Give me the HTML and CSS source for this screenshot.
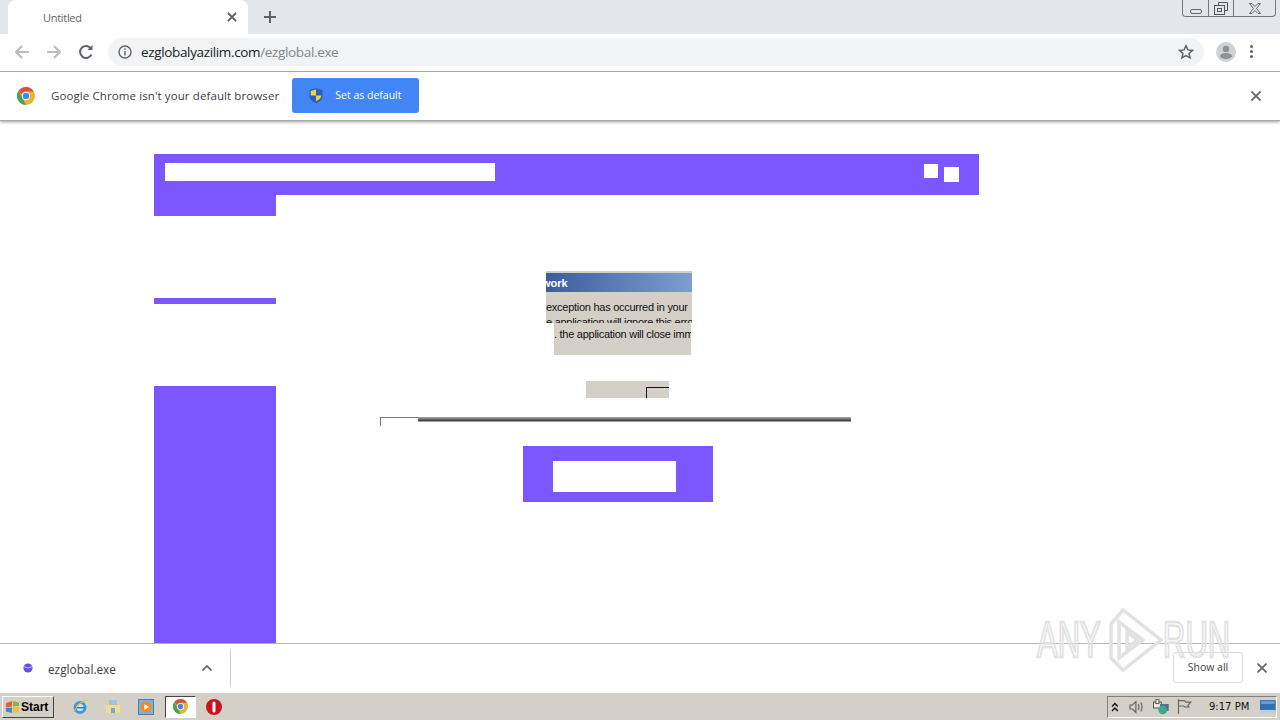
FILE: index.html
```html
<!DOCTYPE html>
<html lang="en">
<head>
    <meta charset="UTF-8">
    <title>Untitled</title>
    <link rel="stylesheet" href="styles.css">
</head>
<body>
    <div class="tabstrip">
        <div class="tab">
            <span class="tab-title">Untitled</span>
            <svg class="tab-close" width="10" height="10" viewBox="0 0 10 10"><path d="M1 1l8 8M9 1l-8 8" stroke="#5f6368" stroke-width="1.8"/></svg>
        </div>
        <svg class="new-tab" width="12" height="12" viewBox="0 0 12 12"><path d="M6 0v12M0 6h12" stroke="#5f6368" stroke-width="2"/></svg>
        <div class="win-controls">
            <div class="win-btn"><span class="win-min"></span></div>
            <div class="win-btn">
                <svg width="14" height="13" viewBox="0 0 14 13" fill="none" stroke="#555"><path d="M4.500 3V.5h9v8H11"/><rect x=".5" y="3.500" width="10" height="9"/><rect x="3.500" y="6.500" width="4" height="3"/></svg>
            </div>
            <div class="win-btn win-btn-close">
                <svg width="14" height="11" viewBox="0 0 14 11" fill="none" stroke="#666"><path d="M1.500.5h2.500l3 3 3-3h2.500l-4 5 4 5h-2.500l-3-3-3 3H1.500l4-5z"/></svg>
            </div>
        </div>
    </div>

    <div class="toolbar">
        <svg class="nav-icon" width="16" height="16" viewBox="0 0 16 16" fill="none" stroke="#b9bcc1" stroke-width="2"><path d="M15 8H2M8 2L2 8l6 6"/></svg>
        <svg class="nav-icon" width="16" height="16" viewBox="0 0 16 16" fill="none" stroke="#b9bcc1" stroke-width="2"><path d="M1 8h13M8 2l6 6-6 6"/></svg>
        <svg class="nav-icon" width="16" height="16" viewBox="0 0 16 16" fill="none" stroke="#5f6368" stroke-width="2"><path d="M13.500 10.500A6 6 0 1 1 13 4.500"/><path d="M14.500 1v5h-5" fill="#5f6368" stroke="none"/></svg>
        <div class="omnibox">
            <svg width="14" height="14" viewBox="0 0 14 14" fill="none" stroke="#5f6368" stroke-width="1.400"><circle cx="7" cy="7" r="6"/><path d="M7 6v4.500M7 3.300v1.500"/></svg>
            <span class="url">ezglobalyazilim.com<span class="url-path">/ezglobal.exe</span></span>
            <svg class="star" width="16" height="16" viewBox="0 0 16 16" fill="none" stroke="#5f6368" stroke-width="1.500"><path d="M8 1.800l1.900 4.100 4.500.5-3.300 3 .9 4.500L8 11.600l-4 2.300.9-4.500-3.300-3 4.500-.5z"/></svg>
        </div>
        <div class="avatar">
            <svg width="20" height="20" viewBox="0 0 20 20"><circle cx="10" cy="10" r="10" fill="#d0d1d3"/><circle cx="10" cy="7" r="3.200" fill="#8f9194"/><ellipse cx="10" cy="14" rx="6" ry="3" fill="#8f9194"/></svg>
        </div>
        <div class="dots"><i></i><i></i><i></i></div>
    </div>

    <div class="infobar">
        <svg class="chrome-logo" width="18" height="18" viewBox="0 0 18 18"><circle cx="9" cy="9" r="9" fill="#e5b52c"/><path d="M9 0a9 9 0 0 1 7.800 4.500H9a4.500 4.500 0 0 0-4.200 3L1.700 3.700A9 9 0 0 1 9 0z" fill="#d8503f"/><path d="M1.700 3.700l3.900 7.500 3.400 6.800A9 9 0 0 1 1.700 3.700z" fill="#4ba35a"/><circle cx="9" cy="9" r="4.200" fill="#fff"/><circle cx="9" cy="9" r="3.200" fill="#4a86e8"/></svg>
        <span class="info-text">Google Chrome isn't your default browser</span>
        <button class="default-btn">
            <svg width="14" height="15" viewBox="0 0 14 15"><path d="M7 0l6.500 2v6c0 3.500-3 5.800-6.500 7C3.500 13.800.5 11.500.5 8V2z" fill="#2f5fb8"/><path d="M7 1.500V7.500H1.800V3z" fill="#f0d24a"/><path d="M7 7.500h5.200c0 2.800-2.400 4.500-5.200 5.600z" fill="#f0d24a"/></svg>
            Set as default
        </button>
        <svg class="info-close" width="10" height="10" viewBox="0 0 10 10"><path d="M.5.500l9 9M9.500.500l-9 9" stroke="#5f6368" stroke-width="1.800"/></svg>
    </div>

    <div class="page">
        <div class="frag bar-head">
            <div class="frag head-field"></div>
            <div class="frag head-sq-a"></div>
            <div class="frag head-sq-b"></div>
        </div>
        <div class="frag side-a"></div>
        <div class="frag side-b"></div>
        <div class="frag side-c"></div>

        <div class="frag dlg-edge"></div>
        <div class="frag dlg-title"><span>work</span></div>
        <div class="frag dlg-body">
            <p class="dlg-line">exception has occurred in your</p>
            <p class="dlg-line">e application will ignore this error</p>
        </div>
        <div class="frag dlg-lower"><p class="dlg-line">. the application will close imm</p></div>
        <div class="frag dlg-btns"><div class="frag dlg-btn-edge"></div></div>
        <div class="frag rule-thin"></div>
        <div class="frag rule-thick"></div>

        <div class="frag cta"><div class="cta-inner"></div></div>
    </div>

    <div class="shelf">
        <div class="shelf-item">
            <svg width="10" height="10" viewBox="0 0 12 12"><circle cx="6" cy="6" r="5.500" fill="#6a4de0"/><path d="M1 4.500Q6 7.500 11 4.500" stroke="#d9d4f7" fill="none"/></svg>
            <span class="shelf-name">ezglobal.exe</span>
            <svg class="shelf-caret" width="10" height="6" viewBox="0 0 10 6" fill="none" stroke="#5f6368" stroke-width="1.600"><path d="M.5 5.500L5 1l4.500 4.500"/></svg>
        </div>
        <div class="shelf-sep"></div>
        <button class="show-all">Show all</button>
        <svg class="shelf-close" width="10" height="10" viewBox="0 0 10 10"><path d="M.5.500l9 9M9.500.500l-9 9" stroke="#5f6368" stroke-width="1.600"/></svg>
    </div>

    <div class="taskbar">
        <button class="start">
            <svg width="15" height="14" viewBox="0 0 15 14"><path d="M1 3l6-2v5.500l-6 1z" fill="#e8612c"/><path d="M8 1l6 1.500V6L8 6.500z" fill="#7dba3c"/><path d="M1 8l6-.5V13l-6-1.500z" fill="#3f86d8"/><path d="M8 7.500l6-.5v5l-6 1z" fill="#f2bf2f"/></svg>
            Start
        </button>
        <div class="quick">
            <svg width="16" height="16" viewBox="0 0 16 16"><circle cx="8" cy="8.500" r="6.500" fill="#3f9be0"/><circle cx="8" cy="8.500" r="3.500" fill="#cfeaf9"/><path d="M3 8h10v1.500H3z" fill="#2f7fc4"/><path d="M2 13Q6 3 15 1" stroke="#e9b93c" fill="none" stroke-width="1.200"/></svg>
            <svg width="16" height="15" viewBox="0 0 16 15"><path d="M1 3h6l1 2h7v9H1z" fill="#eccf78"/><rect x="4" y="1" width="8" height="6" fill="#9fc6e0"/><path d="M1 6h14v8H1z" fill="#f3dc95"/><rect x="6" y="9" width="4" height="5" fill="#7aa9c9"/></svg>
            <svg width="16" height="16" viewBox="0 0 16 16"><rect x=".5" y=".5" width="15" height="15" fill="#7fb0d9" stroke="#4d7ea8"/><circle cx="8" cy="8" r="5.500" fill="#ef8a1f"/><path d="M6.300 5v6L11 8z" fill="#fff"/></svg>
            <div class="task-active">
                <svg width="15" height="15" viewBox="0 0 18 18"><circle cx="9" cy="9" r="9" fill="#e5b52c"/><path d="M9 0a9 9 0 0 1 7.800 4.500H9a4.500 4.500 0 0 0-4.200 3L1.700 3.700A9 9 0 0 1 9 0z" fill="#d8503f"/><path d="M1.700 3.700l3.900 7.500 3.400 6.800A9 9 0 0 1 1.700 3.700z" fill="#4ba35a"/><circle cx="9" cy="9" r="4.200" fill="#fff"/><circle cx="9" cy="9" r="3.200" fill="#4a86e8"/></svg>
            </div>
            <svg width="16" height="16" viewBox="0 0 16 16"><circle cx="8" cy="8" r="8" fill="#c8141c"/><rect x="6.500" y="2.500" width="3" height="11" rx="1.500" fill="#fff"/></svg>
        </div>
        <div class="tray">
            <svg width="8" height="10" viewBox="0 0 8 10" fill="none" stroke="#111" stroke-width="1.500"><path d="M1 4.500L4 1.500l3 3M1 9l3-3 3 3"/></svg>
            <svg class="tray-speaker" width="16" height="14" viewBox="0 0 16 14" fill="none" stroke="#666" stroke-width="1.200"><path d="M1 5h2.500L7 1.500v11L3.500 9H1zM9.500 4q1.500 3 0 6M12 2.500q2.500 4.500 0 9"/></svg>
            <svg width="17" height="16" viewBox="0 0 17 16"><rect x=".5" y="3" width="8" height="6" fill="#eee" stroke="#555"/><rect x="3" y=".5" width="3" height="4" fill="#fff" stroke="#555"/><rect x="7" y="5" width="9" height="7" fill="#4f6f86"/><circle cx="10" cy="11" r="4.500" fill="#3fa78f"/></svg>
            <svg width="15" height="15" viewBox="0 0 15 15" fill="none" stroke="#666" stroke-width="1.200"><path d="M1.500 0v15M1.500 1.500h6l1.500 1.500h5l-3 3.500 1 1.500H8L6.500 7h-5"/></svg>
            <span class="clock">9:17 PM</span>
            <svg class="show-desk" width="16" height="13" viewBox="0 0 16 13"><rect width="16" height="11" fill="#2f6fb0"/><rect y="10" width="16" height="3" fill="#b8cfe0"/><rect x="1" y="1" width="14" height="3" fill="#5f9fd4"/></svg>
        </div>
    </div>

    <div class="watermark" aria-label="ANY RUN">
        <span class="wm-text">ANY</span>
        <svg width="58" height="64" viewBox="0 0 58 64" fill="none" stroke="#e2e2e2" stroke-width="3.500"><path d="M6 16L18 2l38 30-38 30L6 50zM14 14v36l24-18zM22 24v16l10-8z"/></svg>
        <span class="wm-text">RUN</span>
    </div>
</body>
</html>
```

FILE: styles.css
```css
* { box-sizing: border-box; }
html, body { height: 100%; }
body {
    margin: 0;
    width: 1280px;
    height: 720px;
    overflow: hidden;
    position: relative;
    display: flex;
    flex-direction: column;
    background: #fff;
    font-family: "Liberation Sans", Arial, sans-serif;
    color: #3c4043;
}
p { margin: 0; }
button { font-family: inherit; }

/* browser chrome */
.tabstrip {
    height: 34px;
    background: #e3e6ea;
    display: flex;
    align-items: center;
    padding-left: 8px;
    flex-shrink: 0;
}
.tab {
    width: 240px;
    height: 34px;
    background: #fff;
    border-radius: 8px 8px 0 0;
    display: flex;
    align-items: center;
    justify-content: space-between;
    padding: 0 11px 0 35px;
    font-family: "Open Sans", sans-serif;
    font-size: 11px;
    letter-spacing: -.3px;
    color: #5f6368;
}
.new-tab { margin-left: 16px; }
.win-controls {
    margin-left: auto;
    margin-right: 4px;
    margin-bottom: 17px;
    height: 17px;
    display: flex;
    border: 1px solid #777;
    border-top: none;
    border-radius: 0 0 4px 4px;
}
.win-btn {
    width: 25px;
    display: flex;
    align-items: center;
    justify-content: center;
    border-left: 1px solid #777;
}
.win-btn:first-child { border-left: none; }
.win-btn-close { width: 42px; }
.win-min {
    width: 12px;
    height: 5px;
    margin-top: 7px;
    border: 1px solid #666;
    border-radius: 2px;
}

.toolbar {
    height: 38px;
    background: #fff;
    border-bottom: 1px solid #b5b5b5;
    display: flex;
    align-items: center;
    padding: 0 0 2px 14px;
    flex-shrink: 0;
}
.nav-icon { margin-right: 16px; }
.omnibox {
    width: 1096px;
    height: 28px;
    margin-left: -2px;
    background: #f1f3f4;
    border-radius: 14px;
    display: flex;
    align-items: center;
    padding: 0 10px;
}
.url {
    margin-left: 9px;
    font-family: "Open Sans", sans-serif;
    font-size: 13.500px;
    letter-spacing: -.35px;
    color: #202124;
}
.url-path { color: #80868b; }
.star { margin-left: auto; }
.avatar { margin-left: 12px; display: flex; }
.dots {
    margin-left: 14px;
    display: flex;
    flex-direction: column;
    gap: 2px;
}
.dots i {
    width: 3px;
    height: 3px;
    border-radius: 50%;
    background: #5f6368;
}

.infobar {
    height: 49px;
    background: #fff;
    border-bottom: 1px solid #a9a9a9;
    box-shadow: 0 1px 3px rgba(0, 0, 0, .4);
    display: flex;
    align-items: center;
    padding: 0 15px 2px 17px;
    position: relative;
    z-index: 1;
    flex-shrink: 0;
}
.chrome-logo { margin-top: 2px; }
.info-text {
    margin-left: 16px;
    font-family: "Open Sans", sans-serif;
    font-size: 11.500px;
    letter-spacing: .1px;
    color: #3c4043;
}
.default-btn {
    margin-left: 13px;
    width: 127px;
    height: 35px;
    border: none;
    border-radius: 3px;
    background: #4285f4;
    color: #fff;
    font-family: "Open Sans", sans-serif;
    font-size: 10.500px;
    display: flex;
    align-items: center;
    gap: 12px;
    padding: 0 0 0 17px;
}
.info-close { margin: 2px 4px 0 auto; }

/* the broken page: loose fragments on a free canvas */
.page {
    flex: 1;
    position: relative;
    background: #fff;
}
.frag { position: absolute; }
.bar-head { left: 154px; top: 33px; width: 825px; height: 41px; background: #7c57ff; }
.head-field { left: 11px; top: 9px; width: 330px; height: 18px; background: #fff; }
.head-sq-a { left: 770px; top: 10px; width: 14px; height: 14px; background: #fff; }
.head-sq-b { left: 790px; top: 13px; width: 15px; height: 15px; background: #fff; }
.side-a { left: 154px; top: 74px; width: 122px; height: 21px; background: #7c57ff; }
.side-b { left: 154px; top: 177px; width: 122px; height: 6px; background: #7c57ff; }
.side-c { left: 154px; top: 265px; width: 122px; height: 257px; background: #7c57ff; }

.dlg-edge { left: 546px; top: 150px; width: 146px; height: 2px; background: #d4d0c8; }
.dlg-title {
    left: 546px;
    top: 152px;
    width: 146px;
    height: 19px;
    background: linear-gradient(90deg, #3d5c9e, #7d9fcf);
    overflow: hidden;
    color: #fff;
    font-size: 11px;
    font-weight: bold;
    line-height: 21px;
}
.dlg-title span { margin-left: -4px; }
.dlg-body {
    left: 546px;
    top: 171px;
    width: 146px;
    height: 31px;
    background: #d4d0c8;
    overflow: hidden;
    padding-top: 8px;
}
.dlg-body .dlg-line { line-height: 15px; }
.dlg-lower {
    left: 554px;
    top: 202px;
    width: 137px;
    height: 32px;
    background: #d4d0c8;
    overflow: hidden;
    padding-top: 4px;
}
.dlg-line {
    font-size: 11px;
    line-height: 14px;
    letter-spacing: -.27px;
    color: #111;
    white-space: nowrap;
}
.dlg-btns { left: 586px; top: 260px; width: 83px; height: 17px; background: #d4d0c8; overflow: hidden; }
.dlg-btn-edge { left: 60px; top: 6px; width: 30px; height: 20px; border: 1px solid #111; }
.rule-thin { left: 380px; top: 296px; width: 40px; height: 9px; border-left: 1px solid #777; border-top: 1px solid #777; }
.rule-thick { left: 418px; top: 296px; width: 433px; height: 5px; background: linear-gradient(#aaa 0, #777 40%, #444 70%, #ccc 100%); }

.cta {
    left: 523px;
    top: 325px;
    width: 190px;
    height: 56px;
    background: #7c57ff;
    padding: 15px 0 0 30px;
}
.cta-inner { width: 123px; height: 31px; background: #fff; }

/* downloads shelf */
.shelf {
    height: 49px;
    background: #fff;
    border-top: 1px solid #b5b5b5;
    display: flex;
    align-items: center;
    flex-shrink: 0;
    padding-right: 13px;
}
.shelf-item {
    width: 230px;
    display: flex;
    align-items: center;
    padding-left: 23px;
}
.shelf-name {
    margin: 2px 0 0 15px;
    font-family: "Open Sans", sans-serif;
    font-size: 11.800px;
    color: #3c4043;
}
.shelf-caret { margin-left: auto; margin-right: 18px; }
.shelf-sep { width: 1px; height: 38px; background: #d0d0d0; }
.show-all {
    margin-left: auto;
    margin-bottom: 2px;
    width: 70px;
    height: 31px;
    background: #fff;
    border: 1px solid #dadce0;
    border-radius: 3px;
    padding: 0 0 1px;
    font-family: "Open Sans", sans-serif;
    font-size: 10.500px;
    color: #3c4043;
}
.shelf-close { margin-left: 14px; }

/* windows taskbar */
.taskbar {
    height: 28px;
    background: #d4d0c8;
    border-top: 1px solid #fff;
    display: flex;
    align-items: center;
    flex-shrink: 0;
    padding: 0 3px 0 2px;
}
.start {
    width: 52px;
    height: 22px;
    padding: 0 0 0 2px;
    background: #d4d0c8;
    border: 1px solid;
    border-color: #fff #444 #444 #fff;
    display: flex;
    align-items: center;
    gap: 1px;
    font-size: 12px;
    font-weight: bold;
    color: #000;
}
.quick {
    margin-left: 18px;
    display: flex;
    align-items: center;
    gap: 17px;
}
.task-active {
    width: 31px;
    height: 22px;
    margin: 0 -7px 0 -6px;
    background: #fff;
    border: 1px solid;
    border-color: #444 #fff #fff #444;
    display: flex;
    align-items: center;
    justify-content: center;
}
.tray {
    margin-left: auto;
    width: 170px;
    height: 22px;
    border: 1px solid;
    border-color: #808080 #fff #fff #808080;
    display: flex;
    align-items: center;
    padding-left: 3px;
    gap: 8px;
}
.tray-speaker { margin-left: 2px; }
.clock {
    margin-left: 9px;
    font-family: "DejaVu Sans", sans-serif;
    font-size: 10px;
    color: #111;
    white-space: nowrap;
}
.show-desk { margin-left: 3px; }

/* watermark sits over the page and shelf */
.watermark {
    position: absolute;
    left: 1037px;
    top: 608px;
    width: 196px;
    display: flex;
    align-items: center;
    pointer-events: none;
}
.wm-text {
    font-size: 50px;
    line-height: 64px;
    color: transparent;
    -webkit-text-stroke: 2.500px #e2e2e2;
    display: inline-block;
    transform: scaleX(.62);
    width: 68px;
    transform-origin: left center;
    white-space: nowrap;
}
```
